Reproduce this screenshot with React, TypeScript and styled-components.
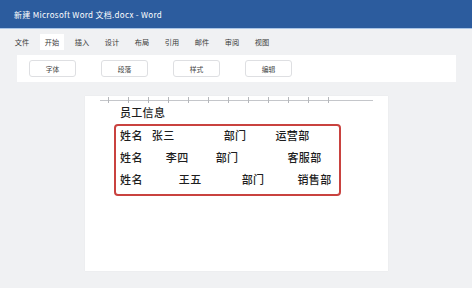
import React from "react";
import styled, { createGlobalStyle } from "styled-components";

const GlobalStyle = createGlobalStyle`
  html, body { margin: 0; padding: 0; }
  body {
    background: #f0f1f3;
    font-family: "Noto Sans CJK SC", "Noto Sans", "Liberation Sans", sans-serif;
  }
`;

const Window = styled.div`
  width: 472px;
  height: 288px;
  overflow: hidden;
  display: flex;
  flex-direction: column;
  background: #f0f1f3;
`;

const TitleBar = styled.div`
  height: 28px;
  flex: none;
  display: flex;
  align-items: center;
  padding-left: 14px;
  background: #2c5c9e;
  border-bottom: 1px solid #a9c4e6;
  color: #ffffff;
  font-size: 8px;
  letter-spacing: 0.3px;
`;

const TabBar = styled.div`
  height: 26px;
  flex: none;
  display: flex;
  align-items: center;
  gap: 6px;
  padding-left: 10px;
`;

const Tab = styled.div<{ $active?: boolean }>`
  width: 24px;
  height: 16px;
  display: flex;
  align-items: center;
  justify-content: center;
  font-size: 7.2px;
  color: #3a3a3a;
  background: ${(p) => (p.$active ? "#ffffff" : "transparent")};
`;

const Ribbon = styled.div`
  height: 27px;
  flex: none;
  margin: 0 16px 0 17px;
  display: flex;
  align-items: center;
  gap: 25px;
  padding-left: 12px;
  background: #ffffff;
`;

const GroupButton = styled.div`
  width: 45px;
  height: 15px;
  display: flex;
  align-items: center;
  justify-content: center;
  border: 1px solid #dedfe2;
  border-radius: 3px;
  font-size: 6.8px;
  color: #444;
  background: #ffffff;
`;

const Page = styled.div`
  width: 303px;
  height: 175px;
  margin: 14px 0 0 85px;
  background: #ffffff;
  box-shadow: 0 0 1px rgba(0, 0, 0, 0.08);
  display: flex;
  flex-direction: column;
`;

const RulerSvg = styled.svg`
  display: block;
  flex: none;
`;

const Heading = styled.div`
  margin-left: 35px;
  height: 16px;
  line-height: 16px;
  font-size: 11px;
  font-weight: 500;
  letter-spacing: 0.3px;
  color: #1e1e1e;
`;

const InfoBox = styled.div`
  margin: 4px 0 0 29px;
  width: 219px;
  height: 68px;
  border: 2px solid #c9423f;
  border-radius: 4px;
  display: flex;
  flex-direction: column;
  gap: 4px;
  padding: 0 0 0 4px;
  box-sizing: content-box;
`;

const Row = styled.div`
  display: flex;
  height: 18px;
  align-items: center;
`;

const Cell = styled.span<{ $gap: number }>`
  margin-left: ${(p) => p.$gap}px;
  font-size: 11px;
  font-weight: 500;
  letter-spacing: 0.4px;
  color: #1e1e1e;
  white-space: nowrap;
`;

const tabs = ["文件", "开始", "插入", "设计", "布局", "引用", "邮件", "审阅", "视图"];
const groups = ["字体", "段落", "样式", "编辑"];

const rows: { text: string; gap: number }[][] = [
  [
    { text: "姓名", gap: 0 },
    { text: "张三", gap: 9 },
    { text: "部门", gap: 49 },
    { text: "运营部", gap: 29 },
  ],
  [
    { text: "姓名", gap: 0 },
    { text: "李四", gap: 23 },
    { text: "部门", gap: 27 },
    { text: "客服部", gap: 49 },
  ],
  [
    { text: "姓名", gap: 0 },
    { text: "王五", gap: 36 },
    { text: "部门", gap: 40 },
    { text: "销售部", gap: 33 },
  ],
];

function Ruler() {
  const ticks = Array.from({ length: 12 }, (_, i) => 23.5 + i * 20);
  return (
    <RulerSvg width="303" height="8" viewBox="0 0 303 8">
      <line x1="15" y1="4.5" x2="288" y2="4.5" stroke="#c4c6ca" strokeWidth="1" />
      {ticks.map((x) => (
        <line key={x} x1={x} y1="1" x2={x} y2="7" stroke="#b5b7bb" strokeWidth="1" />
      ))}
    </RulerSvg>
  );
}

export default function App() {
  return (
    <>
      <GlobalStyle />
      <Window>
        <TitleBar>新建 Microsoft Word 文档.docx - Word</TitleBar>
        <TabBar>
          {tabs.map((t) => (
            <Tab key={t} $active={t === "开始"}>
              {t}
            </Tab>
          ))}
        </TabBar>
        <Ribbon>
          {groups.map((g) => (
            <GroupButton key={g}>{g}</GroupButton>
          ))}
        </Ribbon>
        <Page>
          <Ruler />
          <Heading>员工信息</Heading>
          <InfoBox>
            {rows.map((r, i) => (
              <Row key={i}>
                {r.map((c, j) => (
                  <Cell key={j} $gap={c.gap}>
                    {c.text}
                  </Cell>
                ))}
              </Row>
            ))}
          </InfoBox>
        </Page>
      </Window>
    </>
  );
}
